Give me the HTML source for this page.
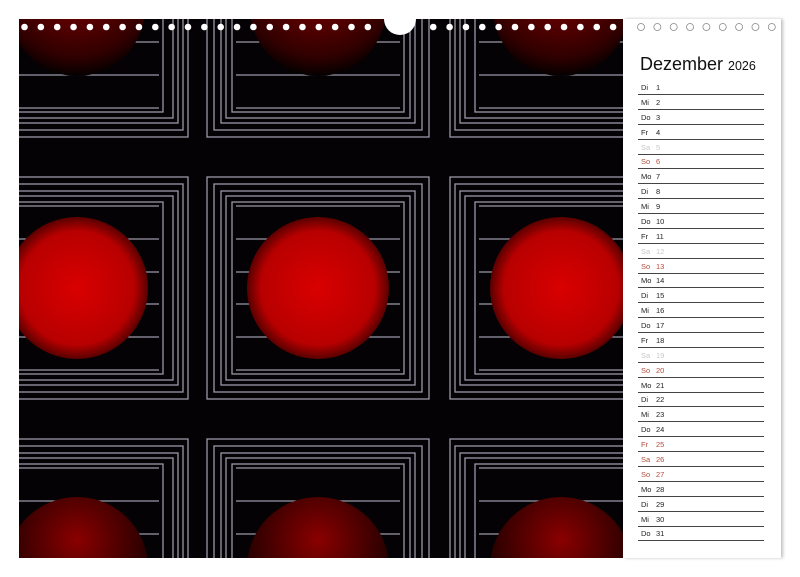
<!DOCTYPE html>
<html><head><meta charset="utf-8"><style>
html,body{margin:0;padding:0;background:#fff;width:800px;height:577px;overflow:hidden;}
body{position:relative;font-family:"Liberation Sans",sans-serif;}
#panel{position:absolute;left:623px;top:19px;width:158px;height:539px;background:#fff;box-shadow:2px 0 3px rgba(0,0,0,0.25);}
.t{position:absolute;left:640px;top:54px;font-size:18px;color:#111;white-space:nowrap;}
.t span{font-size:12.5px;}
.r{position:absolute;left:638px;width:126px;height:14px;border-bottom:1px solid #444;font-size:7.5px;color:#222;}
.r b{font-weight:normal;position:absolute;left:3px;top:3px;}
.r i{font-style:normal;position:absolute;left:18px;top:3px;}
.g{color:#c8c8c8;}.s{color:#b34a3a;}
</style></head><body>
<svg width="800" height="577" style="position:absolute;left:0;top:0">
<defs>
<radialGradient id="sp" cx="0.5" cy="0.5" r="0.5"><stop offset="0" stop-color="#d90000"/><stop offset="0.8" stop-color="#b80000"/><stop offset="1" stop-color="#5a0000"/></radialGradient>
<radialGradient id="sd" cx="0.5" cy="0.3" r="0.6"><stop offset="0" stop-color="#8a0000"/><stop offset="1" stop-color="#150000"/></radialGradient>
<radialGradient id="st" cx="0.5" cy="0.3" r="0.7"><stop offset="0" stop-color="#8a0000"/><stop offset="0.8" stop-color="#300000"/><stop offset="1" stop-color="#050000"/></radialGradient>
<g id="tile" fill="none" stroke="#9a98a8" stroke-width="1.3">
<rect x="-111" y="-111" width="222" height="222"/>
<rect x="-104" y="-104" width="208" height="208"/>
<rect x="-97" y="-97" width="194" height="194"/>
<rect x="-92" y="-92" width="184" height="184"/>
<rect x="-86" y="-86" width="172" height="172"/>
<path d="M-82 -82H82M-82 -49H82M-82 -16H82M-82 16H82M-82 49H82M-82 82H82"/>
</g>
<g id="tile2" fill="none" stroke="#9a98a8" stroke-width="1.3">
<rect x="-111" y="-111" width="222" height="222"/>
<rect x="-106" y="-104" width="212" height="208"/>
<rect x="-101" y="-97" width="202" height="194"/>
<rect x="-96" y="-92" width="192" height="184"/>
<rect x="-86" y="-86" width="172" height="172"/>
<path d="M-82 -82H82M-82 -49H82M-82 -16H82M-82 16H82M-82 49H82M-82 82H82"/>
</g>
<clipPath id="c"><rect x="19" y="19" width="604" height="539"/></clipPath>
</defs>
<g clip-path="url(#c)">
<rect x="19" y="19" width="604" height="539" fill="#040204"/>
<use href="#tile2" x="77" y="26"/><use href="#tile" x="318" y="26"/><use href="#tile2" x="561" y="26"/>
<use href="#tile2" x="77" y="288"/><use href="#tile" x="318" y="288"/><use href="#tile2" x="561" y="288"/>
<use href="#tile2" x="77" y="550"/><use href="#tile" x="318" y="550"/><use href="#tile2" x="561" y="550"/>
<circle cx="77" cy="8" r="68" fill="url(#st)"/><circle cx="318" cy="8" r="68" fill="url(#st)"/><circle cx="561" cy="8" r="68" fill="url(#st)"/>
<circle cx="77" cy="288" r="71" fill="url(#sp)"/><circle cx="318" cy="288" r="71" fill="url(#sp)"/><circle cx="561" cy="288" r="71" fill="url(#sp)"/>
<circle cx="77" cy="568" r="71" fill="url(#sd)"/><circle cx="318" cy="568" r="71" fill="url(#sd)"/><circle cx="561" cy="568" r="71" fill="url(#sd)"/>
</g>
<circle cx="400" cy="19" r="16" fill="#fff"/>
</svg>
<div id="panel"></div>
<svg width="800" height="40" style="position:absolute;left:0;top:0" id="holes"></svg>
<div class="t">Dezember <span>2026</span></div>
<div id="rows"></div>
<script>
var s='',x;
for(x=24.5;x<620;x+=16.35){ if(Math.abs(x-400)<20) continue; s+='<circle cx="'+x+'" cy="27" r="3.3" fill="#fff"/>';}
for(x=641;x<785;x+=16.35){ s+='<circle cx="'+x+'" cy="27" r="3.5" fill="#fff" stroke="#888" stroke-width="0.8"/>';}
document.getElementById('holes').innerHTML=s;
var d=['Di','Mi','Do','Fr','Sa','So','Mo'],h='';
for(var i=1;i<=31;i++){var n=d[(i-1)%7],c='';
if(n=='Sa')c='g';if(n=='So'||i==25||i==26)c='s';
h+='<div class="r '+c+'" style="top:'+(80+(i-1)*14.88)+'px"><b>'+n+'</b><i>'+i+'</i></div>';}
document.getElementById('rows').innerHTML=h;
</script>
</body></html>
